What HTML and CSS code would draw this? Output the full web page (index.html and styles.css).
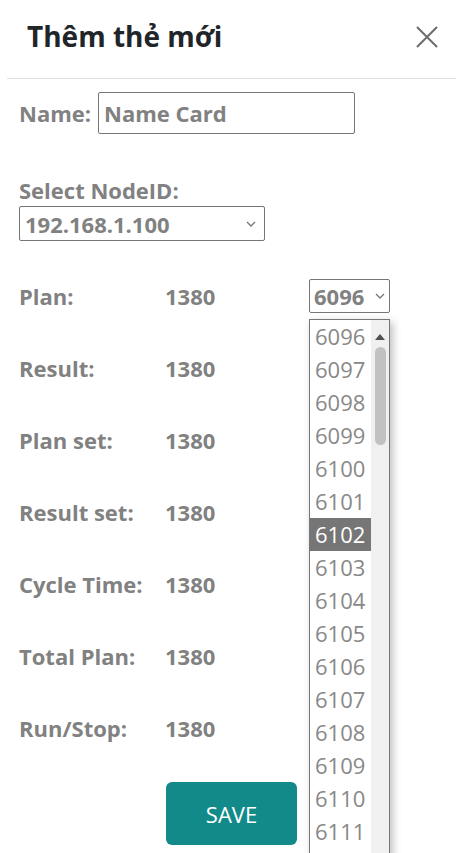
FILE: index.html
```html
<!DOCTYPE html>
<html lang="vi">
<head>
<meta charset="utf-8">
<title>Thêm thẻ mới</title>
<link rel="stylesheet" href="styles.css">
</head>
<body>
<div class="modal">
  <div class="modal-header">
    <h1 class="modal-title">Thêm thẻ mới</h1>
    <button class="close" aria-label="Close">
      <svg width="22" height="22" viewBox="0 0 22 22"><path d="M1 1L21 21M21 1L1 21" stroke="#6c6c6c" stroke-width="2" fill="none"/></svg>
    </button>
  </div>
  <div class="modal-body">
    <div class="name-row">
      <label class="lbl">Name:</label>
      <div class="input">Name Card</div>
    </div>
    <div class="node-block">
      <label class="lbl">Select NodeID:</label>
      <div class="select node-select"><span>192.168.1.100</span><svg class="chev" width="10" height="6" viewBox="0 0 10 6"><path d="M1 1l4 4 4-4" stroke="#777" stroke-width="1.3" fill="none"/></svg></div>
    </div>
    <div class="rows">
      <div class="row"><span class="lbl col">Plan:</span><span class="val">1380</span><div class="select small"><span>6096</span><svg class="chev" width="10" height="6" viewBox="0 0 10 6"><path d="M1 1l4 4 4-4" stroke="#777" stroke-width="1.3" fill="none"/></svg></div></div>
      <div class="row"><span class="lbl col">Result:</span><span class="val">1380</span><div class="select small"></div></div>
      <div class="row"><span class="lbl col">Plan set:</span><span class="val">1380</span><div class="select small"></div></div>
      <div class="row"><span class="lbl col">Result set:</span><span class="val">1380</span><div class="select small"></div></div>
      <div class="row"><span class="lbl col">Cycle Time:</span><span class="val">1380</span><div class="select small"></div></div>
      <div class="row"><span class="lbl col">Total Plan:</span><span class="val">1380</span><div class="select small"></div></div>
      <div class="row"><span class="lbl col">Run/Stop:</span><span class="val">1380</span><div class="select small"></div></div>
    </div>
    <div class="footer">
      <button class="save">SAVE</button>
    </div>
  </div>
</div>
<div class="dropdown">
  <ul class="options">
    <li>6096</li><li>6097</li><li>6098</li><li>6099</li><li>6100</li><li>6101</li>
    <li class="selected">6102</li><li>6103</li><li>6104</li><li>6105</li><li>6106</li>
    <li>6107</li><li>6108</li><li>6109</li><li>6110</li><li>6111</li>
  </ul>
  <div class="scrollbar">
    <svg class="arrow" width="10" height="6" viewBox="0 0 10 6"><path d="M0 6L5 0L10 6Z" fill="#505050"/></svg>
    <div class="thumb"></div>
  </div>
</div>
</body>
</html>
```
FILE: styles.css
```css
* { box-sizing: border-box; }
html, body { margin: 0; padding: 0; background: #fff; overflow: hidden; }
body {
  font-family: "Open Sans", "Noto Sans", sans-serif;
  width: 469px;
  height: 853px;
  position: relative;
}
.modal {
  margin-left: 7px;
  width: 449px;
}
.modal-header {
  height: 79px;
  border-bottom: 1px solid #dee2e6;
  display: flex;
  align-items: center;
  justify-content: space-between;
  padding: 0 18px 4px 20px;
}
.modal-title {
  margin: 0;
  font-size: 28px;
  font-weight: 700;
  color: #212529;
  line-height: 1.2;
}
.close {
  border: 0;
  background: none;
  padding: 0;
  width: 22px;
  height: 22px;
  display: flex;
}
.modal-body {
  padding: 13px 12px 0 12px;
}
.lbl {
  font-size: 22px;
  font-weight: 700;
  color: #818181;
  line-height: 30px;
}
.name-row {
  display: flex;
  align-items: center;
  gap: 7px;
}
.input {
  width: 257px;
  height: 42px;
  border: 1px solid #767676;
  border-radius: 2px;
  font-size: 22px;
  font-weight: 700;
  color: #818181;
  padding: 0 5px;
  display: flex;
  align-items: center;
}
.node-block {
  margin-top: 41px;
  display: flex;
  flex-direction: column;
  align-items: flex-start;
  gap: 1px;
}
.select {
  border: 1px solid #767676;
  border-radius: 2px;
  display: flex;
  align-items: center;
  justify-content: space-between;
  font-size: 22px;
  font-weight: 700;
  color: #818181;
  padding: 0 6px 0 5px;
}
.node-select {
  width: 246px;
  height: 35px;
  padding-right: 8px;
}
.chev { flex: none; }
.rows {
  margin-top: 38px;
  display: flex;
  flex-direction: column;
  gap: 38px;
}
.row {
  display: flex;
  align-items: center;
  height: 34px;
}
.col { width: 146px; }
.val {
  width: 144px;
  font-size: 22px;
  font-weight: 700;
  color: #818181;
}
.small {
  width: 81px;
  height: 34px;
  padding: 0 4px;
}
.footer {
  display: flex;
  justify-content: center;
  margin-top: 37px;
}
.save {
  width: 131px;
  height: 63px;
  background: #138a8a;
  color: #fff;
  border: 0;
  border-radius: 6px;
  font-family: inherit;
  font-size: 22px;
  font-weight: 400;
}
.dropdown {
  position: absolute;
  left: 309px;
  top: 319px;
  width: 81px;
  height: 560px;
  border: 1px solid #767676;
  background: #fff;
  box-shadow: 3px 3px 8px rgba(0,0,0,0.25);
  display: flex;
}
.options {
  list-style: none;
  margin: 0;
  padding: 0;
  flex: 1;
}
.options li {
  height: 33px;
  line-height: 33px;
  font-size: 22px;
  color: #888;
  padding-left: 5px;
}
.options li.selected {
  background: #767676;
  color: #fff;
}
.scrollbar {
  width: 18px;
  background: #f0f0f0;
  position: relative;
  display: flex;
  flex-direction: column;
  align-items: center;
  padding-top: 14px;
}
.arrow { flex: none; }
.thumb {
  margin-top: 7px;
  width: 11px;
  height: 98px;
  background: #c1c1c1;
  border-radius: 6px;
}
```
